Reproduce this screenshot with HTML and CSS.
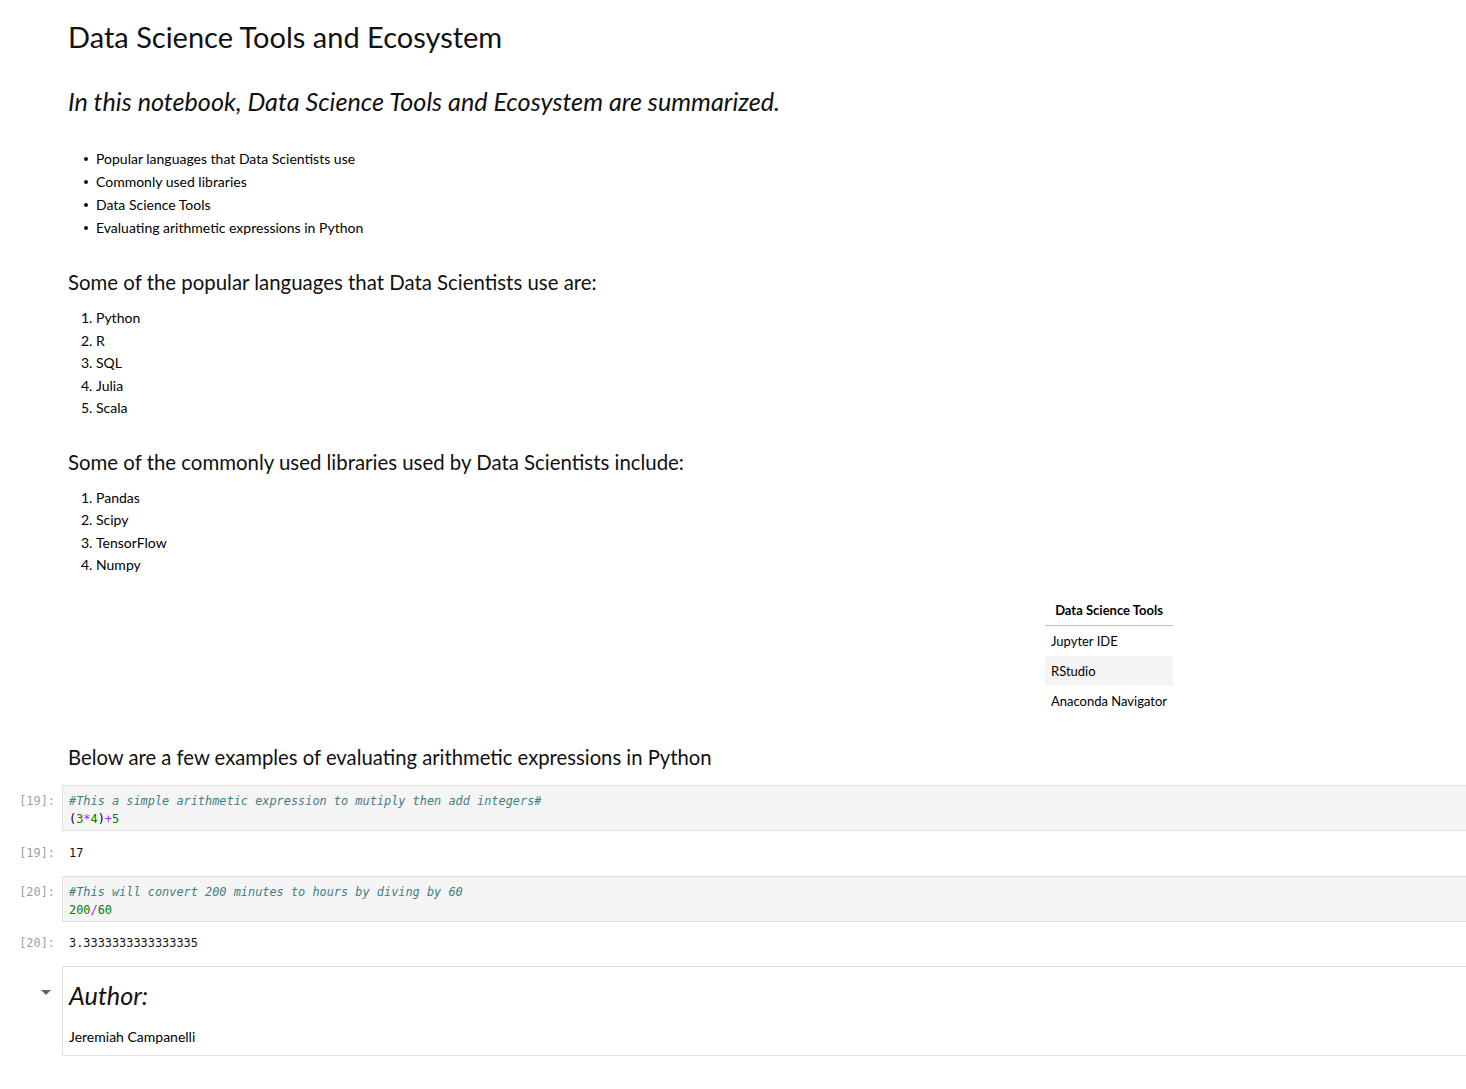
FILE: index.html
```html
<!DOCTYPE html>
<html>
<head>
<meta charset="utf-8">
<title>Data Science Tools and Ecosystem</title>
<link rel="stylesheet" href="styles.css">
</head>
<body>
<div class="notebook">
  <div class="cell md">
    <div class="gutter"></div>
    <div class="md-body">
      <h1 class="title">Data Science Tools and Ecosystem</h1>
      <h2 class="sub">In this notebook, Data Science Tools and Ecosystem are summarized.</h2>
      <ul class="bullets">
        <li>Popular languages that Data Scientists use</li>
        <li>Commonly used libraries</li>
        <li>Data Science Tools</li>
        <li>Evaluating arithmetic expressions in Python</li>
      </ul>
      <h3 class="sec">Some of the popular languages that Data Scientists use are:</h3>
      <ol class="nums">
        <li>Python</li>
        <li>R</li>
        <li>SQL</li>
        <li>Julia</li>
        <li>Scala</li>
      </ol>
      <h3 class="sec sec2">Some of the commonly used libraries used by Data Scientists include:</h3>
      <ol class="nums">
        <li>Pandas</li>
        <li>Scipy</li>
        <li>TensorFlow</li>
        <li>Numpy</li>
      </ol>
      <table class="tools">
        <thead><tr><th>Data Science Tools</th></tr></thead>
        <tbody>
          <tr><td>Jupyter IDE</td></tr>
          <tr class="even"><td>RStudio</td></tr>
          <tr><td>Anaconda Navigator</td></tr>
        </tbody>
      </table>
      <h3 class="sec sec3">Below are a few examples of evaluating arithmetic expressions in Python</h3>
    </div>
  </div>

  <div class="cell code code-first">
    <div class="gutter prompt">[19]:</div>
    <div class="input"><div class="line"><span class="cm">#This a simple arithmetic expression to mutiply then add integers#</span></div><div class="line">(<span class="nu">3</span><span class="op">*</span><span class="nu">4</span>)<span class="op">+</span><span class="nu">5</span></div></div>
  </div>
  <div class="cell out out-first">
    <div class="gutter prompt">[19]:</div>
    <div class="output">17</div>
  </div>

  <div class="cell code">
    <div class="gutter prompt">[20]:</div>
    <div class="input"><div class="line"><span class="cm">#This will convert 200 minutes to hours by diving by 60</span></div><div class="line"><span class="nu">200</span><span class="op">/</span><span class="nu">60</span></div></div>
  </div>
  <div class="cell out">
    <div class="gutter prompt">[20]:</div>
    <div class="output">3.3333333333333335</div>
  </div>

  <div class="cell author">
    <div class="gutter caret-wrap"><span class="caret"></span></div>
    <div class="author-box">
      <h2 class="sub author-h">Author:</h2>
      <p class="name">Jeremiah Campanelli</p>
    </div>
  </div>
</div>
</body>
</html>
```
FILE: styles.css
```css
html, body {
  margin: 0;
  padding: 0;
  background: #fff;
  overflow: hidden;
}
body {
  font-family: "Lato", "Noto Sans", sans-serif;
  color: #000;
  font-size: 14px;
}
.notebook {
  padding-top: 20px;
  display: flex;
  flex-direction: column;
}
.cell {
  display: flex;
  align-items: flex-start;
}
.gutter {
  width: 62px;
  flex: 0 0 62px;
  box-sizing: border-box;
}
.md-body {
  padding-left: 6px;
  flex: 1;
}
.title {
  margin: 0;
  font-size: 29px;
  line-height: 34px;
  font-weight: 400;
  color: #111;
}
.sub {
  margin: 32px 0 0;
  font-size: 25.2px;
  line-height: 30px;
  font-weight: 400;
  font-style: italic;
  color: #111;
}
.bullets {
  margin: 31px 0 0;
  padding-left: 28px;
  line-height: 23px;
  list-style: none;
}
.bullets li {
  position: relative;
}
.bullets li::before {
  content: "";
  position: absolute;
  left: -12px;
  top: 10px;
  width: 4px;
  height: 4px;
  border-radius: 50%;
  background: #111;
}
.nums {
  margin: 12px 0 0;
  padding-left: 28px;
  line-height: 22.5px;
}
.sec {
  margin: 30px 0 0;
  font-size: 20.4px;
  line-height: 26px;
  font-weight: 400;
  color: #111;
}
.sec2 { margin-top: 29px; }
.sec3 { margin-top: 28px; font-size: 20.25px; }
.tools {
  margin: 18px 0 0 977px;
  border-collapse: collapse;
  font-size: 13px;
}
.tools th {
  font-weight: 700;
  height: 30px;
  padding: 0 7px;
  border-bottom: 1px solid #bdbdbd;
  text-align: center;
}
.tools td {
  height: 30px;
  padding: 0 6px;
  text-align: left;
}
.tools tr.even td { background: #f5f5f5; }

.code { margin-top: 14px; }
.code-first { margin-top: 15px; }
.prompt {
  font-family: "DejaVu Sans Mono", "Liberation Mono", monospace;
  font-size: 11.9px;
  color: #a0a0a0;
  text-align: right;
  padding-right: 7px;
  line-height: 18px;
  padding-top: 7px;
}
.input {
  flex: 1;
  background: #f5f5f5;
  border: 1px solid #e0e0e0;
  border-right: none;
  padding: 6px 6px 2px;
  font-family: "DejaVu Sans Mono", "Liberation Mono", monospace;
  font-size: 11.9px;
  line-height: 18px;
  color: #000;
  white-space: pre;
}
.cm { color: #408080; font-style: italic; }
.nu { color: #008000; }
.op { color: #aa22ff; }
.out { margin-top: 12px; }
.out-first { margin-top: 13px; }
.out .prompt { padding-top: 0; }
.output {
  flex: 1;
  padding-left: 7px;
  font-family: "DejaVu Sans Mono", "Liberation Mono", monospace;
  font-size: 11.9px;
  line-height: 18px;
  color: #111;
}
.author { margin-top: 14px; }
.caret-wrap {
  display: flex;
  justify-content: flex-end;
  padding-right: 11px;
  padding-top: 24px;
}
.caret {
  width: 0;
  height: 0;
  border-left: 5px solid transparent;
  border-right: 5px solid transparent;
  border-top: 5px solid #616161;
}
.author-box {
  flex: 1;
  border: 1px solid #e0e0e0;
  border-right: none;
  padding: 13px 6px 8px;
}
.author-h { margin: 0; }
.name {
  margin: 17px 0 0;
  line-height: 20px;
}
```
